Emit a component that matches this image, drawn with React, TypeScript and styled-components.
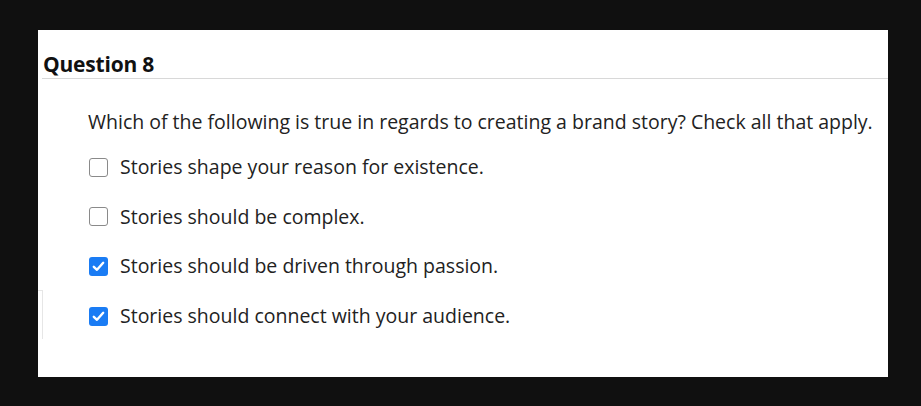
import React from "react";
import styled, { createGlobalStyle } from "styled-components";

const Global = createGlobalStyle`
  html, body { margin: 0; padding: 0; background: #101010; }
  body { font-family: "Open Sans", "Liberation Sans", sans-serif; }
`;

const Page = styled.div`
  width: 921px;
  height: 406px;
  background: #101010;
  padding: 30px 0 0 38px;
  box-sizing: border-box;
`;

const Panel = styled.div`
  width: 850px;
  height: 347px;
  background: #fff;
  position: relative;
  display: flex;
  flex-direction: column;
`;

const Heading = styled.div`
  margin: 22px 0 0 4px;
  padding: 0 0 2px 1px;
  border-bottom: 1px solid #d8d8d8;
  font-size: 21px;
  font-weight: 700;
  color: #111;
  line-height: 24px;
  letter-spacing: -0.2px;
`;

const Prompt = styled.div`
  margin: 30px 0 0 50px;
  font-size: 19.5px;
  color: #222;
  line-height: 26px;
`;

const Options = styled.div`
  display: flex;
  flex-direction: column;
  gap: 23.7px;
  margin: 19px 0 0 51px;
`;

const Option = styled.label`
  display: flex;
  align-items: center;
  gap: 12px;
  font-size: 19.5px;
  color: #222;
  line-height: 26px;
`;

const Box = styled.span<{ $checked: boolean }>`
  width: 19px;
  height: 19px;
  box-sizing: border-box;
  border-radius: 3px;
  border: ${(p) => (p.$checked ? "none" : "1.5px solid #8a8a8a")};
  background: ${(p) => (p.$checked ? "#1a7cf4" : "#fff")};
  display: flex;
  align-items: center;
  justify-content: center;
  flex-shrink: 0;
`;

const SideMark = styled.div`
  position: absolute;
  left: 0;
  top: 260px;
  width: 4px;
  height: 48px;
  border-right: 1px solid #e6e6e6;
  border-top: 1px solid #e6e6e6;
`;

const options = [
  { text: "Stories shape your reason for existence.", checked: false },
  { text: "Stories should be complex.", checked: false },
  { text: "Stories should be driven through passion.", checked: true },
  { text: "Stories should connect with your audience.", checked: true },
];

export default function App() {
  return (
    <>
      <Global />
      <Page>
        <Panel>
          <SideMark />
          <Heading>Question 8</Heading>
          <Prompt>
            Which of the following is true in regards to creating a brand story? Check all that apply.
          </Prompt>
          <Options>
            {options.map((o) => (
              <Option key={o.text}>
                <Box $checked={o.checked}>
                  {o.checked && (
                    <svg width="13" height="11" viewBox="0 0 13 11">
                      <path d="M1.8 5.8 L5 8.8 L11.2 1.8" fill="none" stroke="#fff" strokeWidth="2.4" strokeLinecap="round" strokeLinejoin="round" />
                    </svg>
                  )}
                </Box>
                {o.text}
              </Option>
            ))}
          </Options>
        </Panel>
      </Page>
    </>
  );
}
